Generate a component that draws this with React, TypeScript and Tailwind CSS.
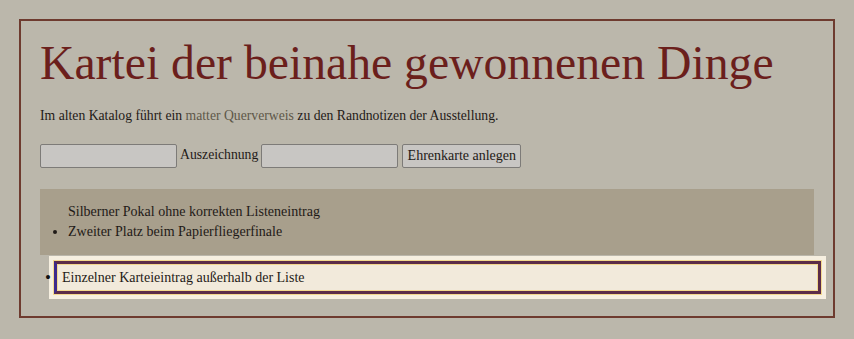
import React from 'react';

const serif = "font-['Liberation_Serif','DejaVu_Serif',serif]";

export default function App() {
  return (
    <div className={`min-h-[339px] bg-[#bbb7ab] pt-[19px] px-[19px] pb-[20px] ${serif} text-[#1f1a17]`}>
      <div className="border-2 border-[#6e3b2f] px-[19px] pb-[22px]">
        <h1 className="text-[47.7px] leading-none text-[#6b1f1c] pt-[18px] whitespace-nowrap">
          Kartei der beinahe gewonnenen Dinge
        </h1>
        <p className="mt-[20px] text-[13.7px] leading-[18px]">
          Im alten Katalog führt ein <span className="text-[#5e5749]">matter Querverweis</span> zu den Randnotizen der Ausstellung.
        </p>
        <div className="mt-[19px] flex items-center gap-[3px] text-[13.7px]">
          <input className="w-[137px] h-[24px] bg-[#c8c6c3] border border-[#7d7b78] rounded-[2px]" />
          <span>Auszeichnung</span>
          <input className="w-[137px] h-[24px] bg-[#c8c6c3] border border-[#7d7b78] rounded-[2px]" />
          <button className="h-[24px] w-[119px] ml-[1px] bg-[#c8c6c3] border border-[#7d7b78] rounded-[2px] text-[14px]">
            Ehrenkarte anlegen
          </button>
        </div>
        <ul className="mt-[21px] bg-[#a89f8c] py-[13px] pl-[28px] text-[14px] leading-[20px] w-[774px]">
          <li className="list-none">Silberner Pokal ohne korrekten Listeneintrag</li>
          <li className="list-disc">Zweiter Platz beim Papierfliegerfinale</li>
        </ul>
        <ul className="mt-[6px] pl-[14px] text-[14px]">
          <li className="relative list-none w-[767px] h-[33px] border-[3px] border-[#5c2c48] border-l-[#3d2a8c] bg-[#f2eadb] px-[5px] leading-[27px] outline outline-1 outline-[#f3d88e] shadow-[0_0_0_5px_#f6efe0,inset_0_0_0_1px_#f3d88e] before:content-['•'] before:absolute before:left-[-12px] before:top-0 before:text-[17px] before:text-[#111]">
            Einzelner Karteieintrag außerhalb der Liste
          </li>
        </ul>
      </div>
    </div>
  );
}
